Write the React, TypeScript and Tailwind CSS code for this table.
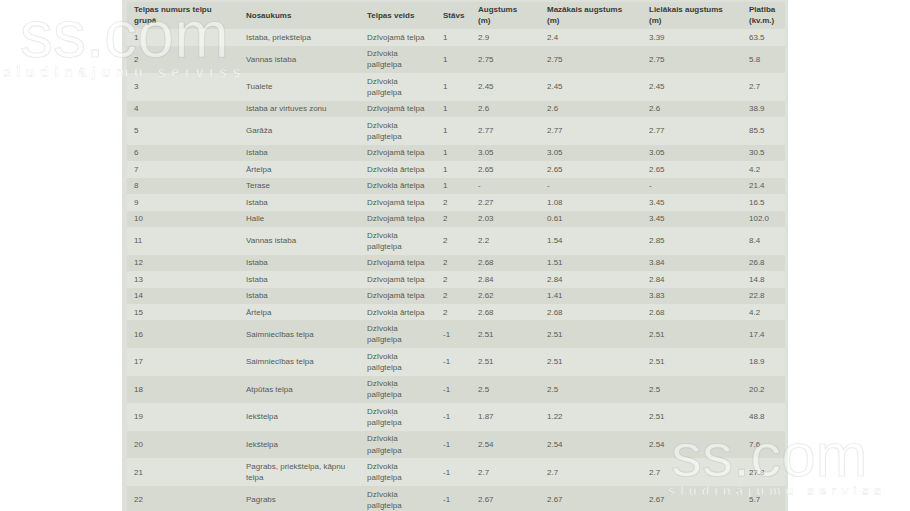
import { Fragment } from "react";

const headers = [
  ["Telpas numurs telpu", "grupā"],
  ["Nosaukums"],
  ["Telpas veids"],
  ["Stāvs"],
  ["Augstums", "(m)"],
  ["Mazākais augstums", "(m)"],
  ["Lielākais augstums", "(m)"],
  ["Platība", "(kv.m.)"],
];

const colWidths = ["w-[112px]", "w-[121px]", "w-[76px]", "w-[35px]", "w-[69px]", "w-[102px]", "w-[100px]", "w-[43px]"];

const DZ = "Dzīvojamā telpa";
const PAL = "Dzīvokļa|palīgtelpa";
const ART = "Dzīvokļa ārtelpa";

const rows: string[][] = [
  ["1", "Istaba, priekštelpa", DZ, "1", "2.9", "2.4", "3.39", "63.5"],
  ["2", "Vannas istaba", PAL, "1", "2.75", "2.75", "2.75", "5.8"],
  ["3", "Tualete", PAL, "1", "2.45", "2.45", "2.45", "2.7"],
  ["4", "Istaba ar virtuves zonu", DZ, "1", "2.6", "2.6", "2.6", "38.9"],
  ["5", "Garāža", PAL, "1", "2.77", "2.77", "2.77", "85.5"],
  ["6", "Istaba", DZ, "1", "3.05", "3.05", "3.05", "30.5"],
  ["7", "Ārtelpa", ART, "1", "2.65", "2.65", "2.65", "4.2"],
  ["8", "Terase", ART, "1", "-", "-", "-", "21.4"],
  ["9", "Istaba", DZ, "2", "2.27", "1.08", "3.45", "16.5"],
  ["10", "Halle", DZ, "2", "2.03", "0.61", "3.45", "102.0"],
  ["11", "Vannas istaba", PAL, "2", "2.2", "1.54", "2.85", "8.4"],
  ["12", "Istaba", DZ, "2", "2.68", "1.51", "3.84", "26.8"],
  ["13", "Istaba", DZ, "2", "2.84", "2.84", "2.84", "14.8"],
  ["14", "Istaba", DZ, "2", "2.62", "1.41", "3.83", "22.8"],
  ["15", "Ārtelpa", ART, "2", "2.68", "2.68", "2.68", "4.2"],
  ["16", "Saimniecības telpa", PAL, "-1", "2.51", "2.51", "2.51", "17.4"],
  ["17", "Saimniecības telpa", PAL, "-1", "2.51", "2.51", "2.51", "18.9"],
  ["18", "Atpūtas telpa", PAL, "-1", "2.5", "2.5", "2.5", "20.2"],
  ["19", "Iekštelpa", PAL, "-1", "1.87", "1.22", "2.51", "48.8"],
  ["20", "Iekštelpa", PAL, "-1", "2.54", "2.54", "2.54", "7.6"],
  ["21", "Pagrabs, priekštelpa, kāpņu|telpa", PAL, "-1", "2.7", "2.7", "2.7", "27.8"],
  ["22", "Pagrabs", PAL, "-1", "2.67", "2.67", "2.67", "5.7"],
];

// "|" marks where the original text wraps
const Lines = ({ text }: { text: string }) => (
  <>
    {text.split("|").map((part, i) => (
      <Fragment key={i}>
        {i > 0 && <br />}
        {part}
      </Fragment>
    ))}
  </>
);

const Watermark = ({ className, big, small, track }: { className: string; big: string; small: string; track: string }) => (
  <div className={`pointer-events-none absolute select-none font-['Liberation_Sans',Arial,sans-serif] ${className}`}>
    <div className={`${big} leading-none text-white/50 [-webkit-text-stroke:1.2px_rgba(0,0,0,0.08)]`}>ss.com</div>
    <div className={`${small} ${track} -mt-[2px] leading-none font-bold text-white/55 [-webkit-text-stroke:0.6px_rgba(0,0,0,0.1)]`}>
      sludinājumu serviss
    </div>
  </div>
);

export default function App() {
  return (
    <div className="relative h-[511px] overflow-hidden bg-white font-['Liberation_Sans',Arial,sans-serif]">
      <div className="mx-auto w-[666px] bg-[#dde1d9] pl-[5px] pr-[3px] pt-[1.5px]">
        <table className="w-full table-fixed border-collapse text-left text-[8px] leading-[11.1px]">
          <colgroup>
            {colWidths.map((w, i) => (
              <col key={i} className={w} />
            ))}
          </colgroup>
          <thead>
            <tr className="bg-[#d6dad1]">
              {headers.map((h, i) => (
                <th key={i} className="whitespace-nowrap py-[2.7px] pl-[7px] pr-[5px] align-middle font-bold text-[#3a3b38]">
                  {h.map((line, j) => (
                    <Fragment key={j}>
                      {j > 0 && <br />}
                      {line}
                    </Fragment>
                  ))}
                </th>
              ))}
            </tr>
          </thead>
          <tbody>
            {rows.map((row, r) => (
              <tr key={r} className={r % 2 === 0 ? "bg-[#e0e4dc]" : "bg-[#d6dad1]"}>
                {row.map((cell, c) => (
                  <td key={c} className="whitespace-nowrap py-[2.7px] pl-[7px] pr-[5px] align-middle text-[#595b56]">
                    <Lines text={cell} />
                  </td>
                ))}
              </tr>
            ))}
          </tbody>
        </table>
      </div>

      <Watermark className="left-[20px] top-[1px]" big="text-[66px]" small="text-[14px] -ml-[17px]" track="tracking-[5.7px]" />
      <Watermark className="left-[671px] top-[424px]" big="text-[62px]" small="text-[13px] -ml-[3px]" track="tracking-[4.9px]" />
    </div>
  );
}
